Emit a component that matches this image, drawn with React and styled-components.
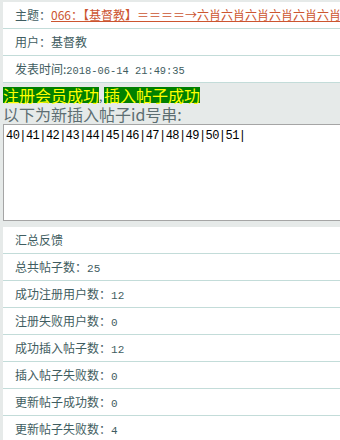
import React from "react";
import styled, { createGlobalStyle } from "styled-components";

const GlobalStyle = createGlobalStyle`
  html, body {
    margin: 0;
    padding: 0;
    background: #e6eae9;
    overflow: hidden;
  }
  body {
    font-family: "Noto Sans CJK SC", "Liberation Sans", sans-serif;
    font-size: 12px;
    color: #3f5d61;
  }
`;

const Page = styled.div`
  padding: 2px 0 0 3px;
  overflow: hidden;
`;

const Panel = styled.div`
  background: #ffffff;
  width: 360px;
`;

const Row = styled.div`
  height: 26px;
  line-height: 26px;
  padding-left: 12px;
  border-bottom: 1px solid #c3dcd9;
  white-space: nowrap;
  overflow: hidden;
`;

const TitleLink = styled.a`
  color: #cc5530;
  text-decoration: underline;
`;

const Mono = styled.span`
  font-family: "Liberation Mono", monospace;
  font-size: ${({ $small }) => ($small ? "10.4px" : "11px")};
`;

const Notice = styled.div`
  margin-top: 3px;
  font-size: 16px;
  color: #5d6e72;
  white-space: nowrap;
`;

const NoticeLine = styled.div`
  line-height: ${({ $h }) => $h}px;
`;

const Ok = styled.span`
  display: inline-block;
  height: 16px;
  line-height: 16px;
  background: #008000;
  color: #ffff00;
  vertical-align: top;
  margin-top: 1px;
`;

const Sep = styled.span`
  display: inline-block;
  width: 5px;
  color: #3f5f63;
  font-size: 12px;
`;

const IdBox = styled.textarea`
  display: block;
  box-sizing: border-box;
  width: 360px;
  height: 97px;
  margin: 0;
  padding: 4px 2px;
  border: 1px solid #a5a5a5;
  border-right: none;
  resize: none;
  outline: none;
  background: #ffffff;
  color: #000000;
  font-family: "Liberation Mono", monospace;
  font-size: 12px;
  letter-spacing: -0.55px;
  line-height: 15px;
`;

const Summary = styled(Panel)`
  margin-top: 6px;
`;

const stats = [
  ["总共帖子数", "25"],
  ["成功注册用户数", "12"],
  ["注册失败用户数", "0"],
  ["成功插入帖子数", "12"],
  ["插入帖子失败数", "0"],
  ["更新帖子成功数", "0"],
  ["更新帖子失败数", "4"],
];

export default function App() {
  return (
    <Page>
      <GlobalStyle />
      <Panel>
        <Row>
          主题：
          <TitleLink href="#">
            066：【基督教】＝＝＝＝→六肖六肖六肖六肖六肖六肖六肖六肖六肖六肖
          </TitleLink>
        </Row>
        <Row>用户：基督教</Row>
        <Row>
          发表时间:<Mono $small>2018-06-14 21:49:35</Mono>
        </Row>
      </Panel>
      <Notice>
        <NoticeLine $h={17}>
          <Ok>注册会员成功</Ok>
          <Sep>,</Sep>
          <Ok>插入帖子成功</Ok>
        </NoticeLine>
        <NoticeLine $h={20}>以下为新插入帖子id号串:</NoticeLine>
      </Notice>
      <IdBox readOnly defaultValue="40|41|42|43|44|45|46|47|48|49|50|51|" />
      <Summary>
        <Row>汇总反馈</Row>
        {stats.map(([label, value]) => (
          <Row key={label}>
            {label}：<Mono>{value}</Mono>
          </Row>
        ))}
      </Summary>
    </Page>
  );
}
